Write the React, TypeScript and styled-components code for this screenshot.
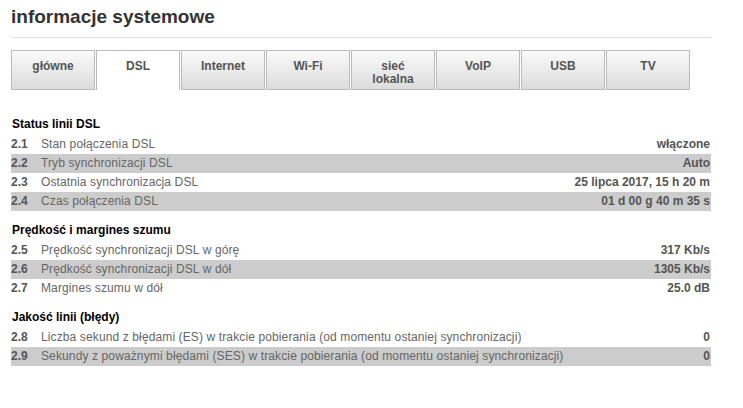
import React from 'react';
import styled, { createGlobalStyle } from 'styled-components';

const GlobalStyle = createGlobalStyle`
  body {
    margin: 0;
    background: #fff;
    font-family: "Liberation Sans", Arial, sans-serif;
  }
`;

const Page = styled.div`
  width: 700px;
  padding: 6px 0 0 11px;
`;

const Title = styled.h1`
  margin: 0;
  font-size: 19px;
  line-height: 22px;
  font-weight: bold;
  color: #333;
`;

const Rule = styled.div`
  margin: 9px 0 12px;
  border-top: 1px solid #ddd;
`;

const Tabs = styled.div`
  display: flex;
  gap: 1px;
`;

const Tab = styled.div<{ $active?: boolean }>`
  box-sizing: border-box;
  width: 84px;
  height: 40px;
  padding-top: 9px;
  border: 1px solid #bbb;
  border-bottom: ${(p) => (p.$active ? 'none' : '1px solid #bbb')};
  background: ${(p) => (p.$active ? '#fff' : 'linear-gradient(#fafafa, #dcdcdc)')};
  color: #555;
  font-size: 12px;
  line-height: 13px;
  font-weight: bold;
  text-align: center;
`;

const Section = styled.section<{ $first?: boolean }>`
  margin-top: ${(p) => (p.$first ? '24px' : '9px')};
`;

const Heading = styled.h2`
  margin: 0;
  padding-left: 1px;
  font-size: 12px;
  line-height: 21px;
  font-weight: bold;
  color: #000;
`;

const Row = styled.div<{ $shaded: boolean }>`
  display: flex;
  height: 19px;
  line-height: 19px;
  font-size: 12px;
  background: ${(p) => (p.$shaded ? '#ccc' : 'transparent')};
`;

const Num = styled.span`
  width: 30px;
  flex: none;
  font-weight: bold;
  color: #555;
`;

const Label = styled.span`
  flex: 1;
  color: #666;
  letter-spacing: 0.12px;
  white-space: nowrap;
`;

const Value = styled.span`
  padding-right: 1px;
  font-weight: bold;
  color: #555;
  white-space: nowrap;
`;

const tabs = ['główne', 'DSL', 'Internet', 'Wi-Fi', 'sieć\nlokalna', 'VoIP', 'USB', 'TV'];

const sections = [
  {
    title: 'Status linii DSL',
    rows: [
      ['2.1', 'Stan połączenia DSL', 'włączone'],
      ['2.2', 'Tryb synchronizacji DSL', 'Auto'],
      ['2.3', 'Ostatnia synchronizacja DSL', '25 lipca 2017, 15 h 20 m'],
      ['2.4', 'Czas połączenia DSL', '01 d 00 g 40 m 35 s'],
    ],
  },
  {
    title: 'Prędkość i margines szumu',
    rows: [
      ['2.5', 'Prędkość synchronizacji DSL w górę', '317 Kb/s'],
      ['2.6', 'Prędkość synchronizacji DSL w dół', '1305 Kb/s'],
      ['2.7', 'Margines szumu w dół', '25.0 dB'],
    ],
  },
  {
    title: 'Jakość linii (błędy)',
    rows: [
      ['2.8', 'Liczba sekund z błędami (ES) w trakcie pobierania (od momentu ostaniej synchronizacji)', '0'],
      ['2.9', 'Sekundy z poważnymi błędami (SES) w trakcie pobierania (od momentu ostaniej synchronizacji)', '0'],
    ],
  },
];

const App: React.FC = () => (
  <Page>
    <GlobalStyle />
    <Title>informacje systemowe</Title>
    <Rule />
    <Tabs>
      {tabs.map((t) => (
        <Tab key={t} $active={t === 'DSL'}>
          {t.split('\n').map((line) => (
            <div key={line}>{line}</div>
          ))}
        </Tab>
      ))}
    </Tabs>
    {sections.map((s, i) => (
      <Section key={s.title} $first={i === 0}>
        <Heading>{s.title}</Heading>
        {s.rows.map(([n, label, value], j) => (
          <Row key={n} $shaded={j % 2 === 1}>
            <Num>{n}</Num>
            <Label>{label}</Label>
            <Value>{value}</Value>
          </Row>
        ))}
      </Section>
    ))}
  </Page>
);

export default App;
